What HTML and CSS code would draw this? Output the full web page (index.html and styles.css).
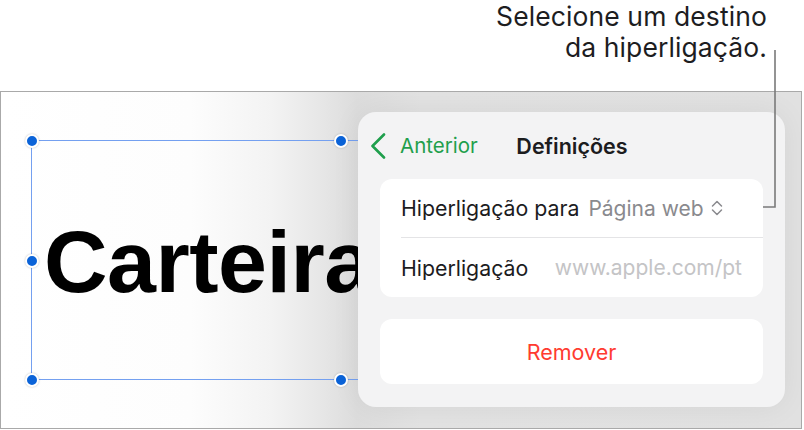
FILE: index.html
```html
<!DOCTYPE html>
<html lang="pt">
<head>
<meta charset="utf-8">
<title>Hiperligação</title>
<link rel="stylesheet" href="styles.css">
</head>
<body>
<div class="callout">
  <p class="callout-text">Selecione um destino<br>da hiperligação.</p>
</div>
<svg class="leader" width="30" height="170" viewBox="0 0 30 170" aria-hidden="true">
  <path d="M22 0 V157 H10" fill="none" stroke="#7a7a7a" stroke-width="1.6"/>
</svg>
<div class="frame">
  <div class="selection">
    <span class="word">Carteira</span>
    <span class="handle h-tl"></span>
    <span class="handle h-tm"></span>
    <span class="handle h-ml"></span>
    <span class="handle h-bl"></span>
    <span class="handle h-bm"></span>
  </div>
  <div class="panel">
    <div class="panel-head">
      <div class="back">
        <svg class="chev" width="16" height="26" viewBox="0 0 16 26" aria-hidden="true">
          <path d="M14 1.5 L2.5 13 L14 24.5" fill="none" stroke="#1f9f4c" stroke-width="2.6" stroke-linecap="round" stroke-linejoin="round"/>
        </svg>
        <span class="back-label">Anterior</span>
      </div>
      <div class="title">Definições</div>
      <div></div>
    </div>
    <div class="card">
      <div class="row">
        <span class="label">Hiperligação para</span>
        <span class="value">Página web</span>
        <svg class="updown" width="12" height="16" viewBox="0 0 12 16" aria-hidden="true">
          <path d="M1.5 6 L6 1.5 L10.5 6 M1.5 10 L6 14.5 L10.5 10" fill="none" stroke="#8a8a8e" stroke-width="1.5" stroke-linecap="round" stroke-linejoin="round"/>
        </svg>
      </div>
      <div class="sep"></div>
      <div class="row row-between">
        <span class="label">Hiperligação</span>
        <span class="placeholder">www.apple.com/pt</span>
      </div>
    </div>
    <div class="card card-action">
      <span class="remove">Remover</span>
    </div>
  </div>
</div>
</body>
</html>
```
FILE: styles.css
```css
html, body {
  margin: 0;
  padding: 0;
}
body {
  width: 804px;
  height: 430px;
  overflow: hidden;
  position: relative;
  background: #ffffff;
  font-family: Inter, "Noto Sans", "Liberation Sans", sans-serif;
  color: #1c1c1e;
}
.callout {
  height: 91px;
  box-sizing: border-box;
  padding-top: 1px;
  padding-right: 37px;
  text-align: right;
}
.callout-text {
  margin: 0;
  font-size: 26.5px;
  line-height: 31px;
  color: #1d1d1f;
  letter-spacing: 0.1px;
}
.leader {
  position: absolute;
  left: 753px;
  top: 50px;
  z-index: 3;
}
.frame {
  position: relative;
  width: 800px;
  height: 336px;
  border: 1px solid #a9a9a9;
  overflow: hidden;
  background: linear-gradient(90deg, #ffffff 0px, #fdfdfd 190px, #f3f3f3 270px, #e6e6e6 322px, #dcdcdc 356px, #e2e2e2 420px, #e1e1e1 100%);
}
.selection {
  position: relative;
  margin-left: 30px;
  margin-top: 48px;
  width: 618px;
  height: 240px;
  box-sizing: border-box;
  border: 1px solid #74a0f0;
  display: flex;
  align-items: center;
  padding-left: 12px;
  padding-top: 3px;
}
.word {
  font-family: "Liberation Sans", Arial, sans-serif;
  font-weight: 700;
  font-size: 88px;
  line-height: 88px;
  color: #000;
  letter-spacing: -0.5px;
  white-space: nowrap;
}
.handle {
  position: absolute;
  width: 10px;
  height: 10px;
  border-radius: 50%;
  background: #0b63d8;
  border: 2px solid #fff;
  box-shadow: 0 0 2px rgba(0, 0, 0, 0.25);
}
.h-tl { left: -7.5px; top: -7.5px; }
.h-tm { left: 301.5px; top: -7.5px; }
.h-ml { left: -7.5px; top: 112.5px; }
.h-bl { left: -7.5px; top: 231.5px; }
.h-bm { left: 301.5px; top: 231.5px; }
.panel {
  position: absolute;
  left: 357px;
  top: 20px;
  width: 427px;
  height: 295px;
  box-sizing: border-box;
  background: #f3f3f4;
  border-radius: 18px;
  box-shadow: 0 0 30px rgba(0, 0, 0, 0.06);
  padding: 0 22px;
  display: flex;
  flex-direction: column;
}
.panel-head {
  height: 67px;
  display: grid;
  grid-template-columns: 1fr auto 1fr;
  align-items: center;
  margin: 0 -22px;
  padding: 0 12px;
}
.back {
  display: flex;
  align-items: center;
  gap: 14px;
}
.chev {
  display: block;
}
.back-label {
  font-size: 20.5px;
  color: #1f9f4c;
}
.title {
  font-size: 21.5px;
  font-weight: 600;
  color: #1c1c1e;
  padding-left: 1px;
}
.card {
  background: #fff;
  border-radius: 12px;
}
.row {
  height: 58px;
  display: flex;
  align-items: center;
  padding: 0 21px;
  gap: 9px;
  font-size: 21.3px;
}
.row-between {
  justify-content: space-between;
  height: 59px;
}
.label {
  color: #1c1c1e;
}
.value {
  color: #8a8a8e;
  font-size: 21px;
}
.updown {
  display: block;
  margin-left: -2px;
}
.placeholder {
  color: #c4c4c6;
  font-size: 21px;
}
.sep {
  height: 1px;
  margin-left: 21px;
  background: #e4e4e6;
}
.card-action {
  margin-top: 22px;
  height: 65px;
  display: flex;
  align-items: center;
  justify-content: center;
}
.remove {
  font-size: 21.5px;
  color: #ff3b30;
}
```
